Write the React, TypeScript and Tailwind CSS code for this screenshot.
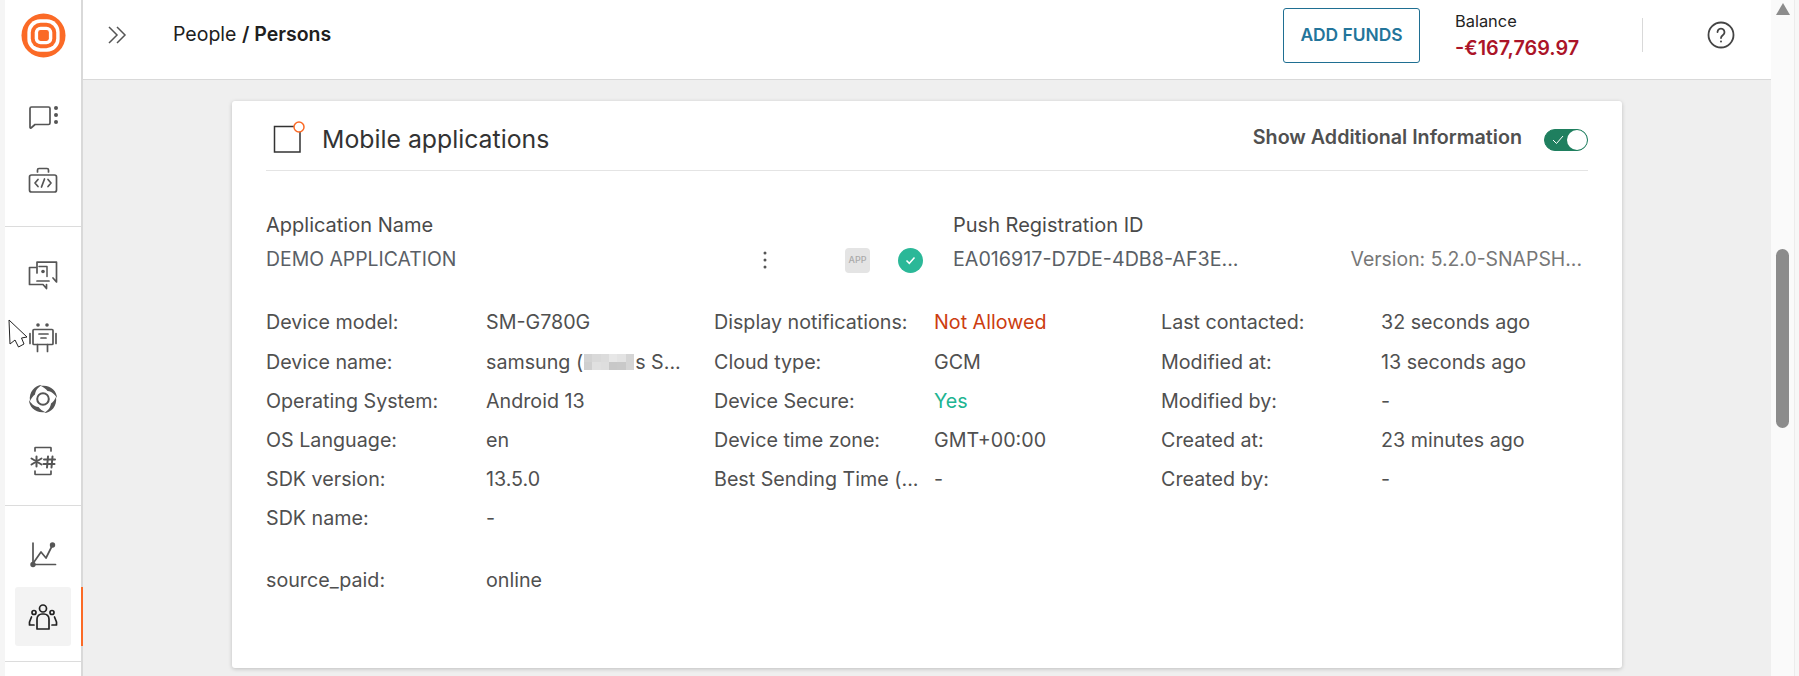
import React from "react";

const Row = ({ label, value, valueClass = "text-[#505050]" }: { label: string; value: React.ReactNode; valueClass?: string }) => (
  <div className="flex h-[39.2px] items-center">
    <div className="w-[220px] shrink-0 truncate pr-2 text-[#505050]">{label}</div>
    <div className={"min-w-0 flex-1 truncate " + valueClass}>{value}</div>
  </div>
);

const NavIcon = ({ children, active }: { children: React.ReactNode; active?: boolean }) => (
  <div className={"mx-[10px] flex h-[59px] w-[56px] shrink-0 items-center justify-center rounded-[3px] " + (active ? "bg-[#f3f3f3]" : "")}>
    <svg width="32" height="32" viewBox="0 0 32 32" fill="none" stroke={active ? "#222" : "#555"} strokeWidth="1.7" strokeLinecap="round" strokeLinejoin="round">
      {children}
    </svg>
  </div>
);

const mosaic = [
  "bg-[#d3d3d3]", "bg-[#d9d9d9]", "bg-[#dcdcdc]", "bg-[#e7e7e7]", "bg-[#e3e3e3]", "bg-[#d5d5d5]",
  "bg-[#cfcfcf]", "bg-[#e0e0e0]", "bg-[#dedede]", "bg-[#c8c8c8]", "bg-[#c9c9c9]", "bg-[#d5d5d5]",
];

export default function App() {
  return (
    <div className="relative flex h-[676px] w-[1799px] overflow-hidden bg-[#f5f5f5] font-['Inter',sans-serif] text-[19.7px]">
      <div className="w-[5px] shrink-0 bg-[#f5f5f5]" />
      <aside className="relative flex w-[78px] shrink-0 flex-col border-r-2 border-[#d9d9d9] bg-white">
        <div className="flex h-[72px] shrink-0 items-center justify-center pb-[2px]">
          <svg width="45" height="45" viewBox="0 0 46 46">
            <circle cx="23" cy="23" r="22.5" fill="#fb6a26" />
            <rect x="6.5" y="6.5" width="33" height="33" rx="13" fill="#fff" />
            <rect x="10" y="10" width="26" height="26" rx="10" fill="#fb6a26" />
            <rect x="14" y="14" width="18" height="18" rx="6" fill="#fff" />
            <rect x="17.5" y="17.5" width="11" height="11" rx="2.5" fill="#fb6a26" />
          </svg>
        </div>
        <div className="flex h-[155px] shrink-0 flex-col items-start gap-[3px] border-b border-[#dcdcdc] pt-[16px]">
          <NavIcon>
            <path d="M3 6.500q0-1.500 1.500-1.500h17q1.500 0 1.500 1.500v14.500q0 1.500-1.500 1.500H8l-4 3.500q-1 .5-1-1z" />
            <circle cx="29" cy="6" r="2" fill="#555" stroke="none" />
            <circle cx="29" cy="13" r="2" fill="#555" stroke="none" />
            <circle cx="29" cy="20" r="2" fill="#555" stroke="none" />
          </NavIcon>
          <NavIcon>
            <rect x="2.500" y="11" width="27" height="17" rx="2" />
            <path d="M10.500 8V6a1.500 1.500 0 0 1 1.500-1.500h8A1.500 1.500 0 0 1 21.500 6v2M11 15.500l-3 3.500 3 3.500M21 15.500l3 3.500-3 3.500M17.500 15l-3 8" />
          </NavIcon>
        </div>
        <div className="flex h-[279px] shrink-0 flex-col items-start gap-[3px] border-b border-[#dcdcdc] pt-[18px]">
          <NavIcon>
            <path d="M9 8.500H2.500v17H16l3.500 4v-4" />
            <path d="M10 14V3.200h19.500V23L26 19" />
            <path d="M10 22h12" />
            <circle cx="16" cy="12.500" r="1.800" fill="#555" stroke="none" />
            <path d="M12 7.500h8v10" strokeWidth="1.500" />
          </NavIcon>
          <NavIcon>
            <rect x="6" y="8.500" width="20" height="15" rx="1" />
            <path d="M12 13h9M14 17h5M10.500 23.500v7M20.500 23.500v7M3 12.500v10M29 12.500v10" />
            <circle cx="11" cy="4" r="1.800" fill="#555" stroke="none" />
            <circle cx="20" cy="4" r="1.800" fill="#555" stroke="none" />
          </NavIcon>
          <NavIcon>
            <circle cx="16" cy="16" r="5.800" strokeWidth="2" />
            <path d="M3 18C1.500 9 8 2 15 2c-3.500 2-6.500 5-7 9.500-2 1.500-4 4-5 6.500z" fill="#555" stroke="none" />
            <path d="M14 3c9-1.500 16 5 16 12-2-3.500-5-6.500-9.500-7-1.500-2-4-4-6.500-5z" fill="#555" stroke="none" />
            <path d="M29 14c1.500 9-5 16-12 16 3.500-2 6.500-5 7-9.500 2-1.500 4-4 5-6.500z" fill="#555" stroke="none" />
            <path d="M18 29c-9 1.500-16-5-16-12 2 3.500 5 6.500 9.500 7 1.500 2 4 4 6.500 5z" fill="#555" stroke="none" />
          </NavIcon>
          <NavIcon>
            <path d="M8 6V3q0-.5.5-.5h15q.5 0 .5.5v3M8 26v3q0 .5.5.5h15q.5 0 .5-.5v-3" />
            <path d="M4.500 13.500l10 6M14.500 13.500l-10 6M9.500 11.500v10" strokeWidth="2" />
            <path d="M17 14.500h11M16.500 19h11M21 11.500l-1 11M25.500 11.500l-1 11" strokeWidth="2" />
          </NavIcon>
        </div>
        <div className="flex h-[156px] shrink-0 flex-col items-start gap-[3px] border-b border-[#dcdcdc] pt-[19px]">
          <NavIcon>
            <path d="M6 4v21.500h22.500" />
            <path d="M7 23l7-10 5 6 6-12" />
            <circle cx="6" cy="25.500" r="2.700" fill="#555" stroke="none" />
            <circle cx="25.500" cy="6" r="2.700" fill="#555" stroke="none" />
          </NavIcon>
          <NavIcon active>
            <circle cx="16" cy="7.500" r="3.500" />
            <path d="M10 28V18a5 5 0 0 1 5-5h2a5 5 0 0 1 5 5v10z" />
            <circle cx="7" cy="11.500" r="2" />
            <circle cx="25" cy="11.500" r="2" />
            <path d="M4.500 16L2.500 21v3H7M27.500 16l2 5v3H25" />
          </NavIcon>
        </div>
        <div className="absolute right-[-2px] top-[587px] h-[59px] w-[2px] bg-[#fb6a26]" />
      </aside>

      <main className="flex w-[1688px] shrink-0 flex-col bg-[#efefef]">
        <header className="flex h-[80px] shrink-0 items-center border-b border-[#d9d9d9] bg-white pb-[9px]">
          <svg className="ml-[25px]" width="19" height="18" viewBox="0 0 19 18" fill="none" stroke="#555" strokeWidth="1.500">
            <path d="M1 1l8 8-8 8M9 1l8 8-8 8" />
          </svg>
          <div className="ml-[46px] text-[19.5px] text-[#202020]">
            People <span className="font-semibold">/ Persons</span>
          </div>
          <button className="ml-auto h-[55px] w-[137px] rounded-[3px] border border-[#1f6f92] text-[17.4px] font-semibold text-[#23759b]">ADD FUNDS</button>
          <div className="ml-[35px] flex w-[187px] flex-col">
            <span className="text-[16.4px] leading-[27px] text-[#222]">Balance</span>
            <span className="text-[19.8px] font-semibold leading-[27px] text-[#ab1428]">-€167,769.97</span>
          </div>
          <div className="h-[34px] w-px bg-[#d9d9d9]" />
          <svg className="ml-[64px] mr-[36px]" width="28" height="28" viewBox="0 0 28 28" fill="none" stroke="#444" strokeWidth="1.800" strokeLinecap="round">
            <circle cx="14" cy="14" r="12.500" />
            <path d="M10.500 11a3.500 3.500 0 1 1 5.500 3c-1.300.9-2 1.500-2 3" />
            <circle cx="14" cy="20.500" r="1" fill="#444" stroke="none" />
          </svg>
        </header>

        <div className="mx-[149px] mt-[21px] h-[567px] rounded-[3px] bg-white px-[34px] shadow-[0_1px_4px_rgba(0,0,0,0.2)]">
          <div className="flex h-[70px] items-center border-b border-[#e4e4e4] pt-[3px]">
            <svg className="ml-[7px]" width="32" height="32" viewBox="0 0 32 32" fill="none">
              <path d="M27 10v21H1.500V5.500H21" stroke="#333" strokeWidth="1.500" />
              <circle cx="26" cy="6" r="5" fill="#fff" stroke="#fb6a26" strokeWidth="1.500" />
            </svg>
            <span className="ml-[17px] mt-[6px] text-[24.8px] text-[#333]">Mobile applications</span>
            <span className="ml-auto mt-[2px] font-semibold text-[#505050]">Show Additional Information</span>
            <div className="ml-[22px] mt-[6px] flex h-[22px] w-[44px] items-center justify-between rounded-full border border-[#1f7f5f] bg-[#1f7f5f] pl-[7px]">
              <svg width="12" height="10" viewBox="0 0 12 10" fill="none" stroke="#fff" strokeWidth="1">
                <path d="M1 5l3.500 3.500L11 1" />
              </svg>
              <span className="h-[20px] w-[20px] rounded-full bg-white" />
            </div>
          </div>

          <div className="mt-[40px] flex">
            <div className="w-[687px] shrink-0">
              <div className="text-[20px] leading-[28px] text-[#4a4a4a]">Application Name</div>
              <div className="mt-[5px] flex h-[32px] items-center text-[19.4px] text-[#5a5f66]">
                <span className="w-[497px]">DEMO APPLICATION</span>
                <svg width="4" height="18" viewBox="0 0 4 18" fill="#555">
                  <circle cx="2" cy="2" r="1.500" />
                  <circle cx="2" cy="9" r="1.500" />
                  <circle cx="2" cy="16" r="1.500" />
                </svg>
                <span className="ml-[78px] flex h-[25px] w-[25px] items-center justify-center rounded-[4px] bg-[#e4e4e4] text-[9px] font-medium text-[#aaa]">APP</span>
                <span className="ml-[28px] flex h-[25px] w-[25px] items-center justify-center rounded-full bg-[#2bb898]">
                  <svg width="11" height="9" viewBox="0 0 11 9" fill="none" stroke="#fff" strokeWidth="1.500">
                    <path d="M1.500 4.500l2.800 2.800L9.500 1.500" />
                  </svg>
                </span>
              </div>
            </div>
            <div className="min-w-0 flex-1">
              <div className="text-[20px] leading-[28px] text-[#4a4a4a]">Push Registration ID</div>
              <div className="mt-[5px] flex h-[32px] items-center justify-between text-[#5a5f66]">
                <span>EA016917-D7DE-4DB8-AF3E...</span>
                <span className="pr-[6px] text-[19.4px] text-[#777]">Version: 5.2.0-SNAPSH...</span>
              </div>
            </div>
          </div>

          <div className="mt-[27.5px] grid grid-cols-[448px_447px_1fr]">
            <div>
              <Row label="Device model:" value="SM-G780G" />
              <Row
                label="Device name:"
                value={
                  <span className="flex items-center">
                    samsung (
                    <span className="mx-[1px] grid h-[16px] w-[50px] shrink-0 grid-cols-6 grid-rows-2">
                      {mosaic.map((c, i) => (
                        <span key={i} className={c} />
                      ))}
                    </span>
                    s S...
                  </span>
                }
              />
              <Row label="Operating System:" value="Android 13" />
              <Row label="OS Language:" value="en" />
              <Row label="SDK version:" value="13.5.0" />
              <Row label="SDK name:" value="-" />
            </div>
            <div className="pr-[14px]">
              <Row label="Display notifications:" value="Not Allowed" valueClass="text-[#cc3d10]" />
              <Row label="Cloud type:" value="GCM" />
              <Row label="Device Secure:" value="Yes" valueClass="text-[#20b491]" />
              <Row label="Device time zone:" value="GMT+00:00" />
              <Row label="Best Sending Time (..." value="-" />
            </div>
            <div>
              <Row label="Last contacted:" value="32 seconds ago" />
              <Row label="Modified at:" value="13 seconds ago" />
              <Row label="Modified by:" value="-" />
              <Row label="Created at:" value="23 minutes ago" />
              <Row label="Created by:" value="-" />
            </div>
          </div>
          <div className="mt-[23px] w-[448px]">
            <Row label="source_paid:" value="online" />
          </div>
        </div>
      </main>

      <div className="flex w-[23px] shrink-0 flex-col items-center bg-[#fafafa] pt-[3px]">
        <svg width="14" height="12" viewBox="0 0 14 12" fill="#8c8c8c">
          <path d="M7 0l7 12H0z" />
        </svg>
        <div className="mt-[234px] h-[179px] w-[13px] rounded-full bg-[#8c8c8c]" />
      </div>
      <div className="w-[5px] shrink-0 border-l border-[#ececec] bg-[#f7f7f7]" />

      <svg className="absolute left-[8px] top-[319px]" width="21" height="30" viewBox="0 0 21 30" fill="#fff" stroke="#222" strokeWidth="1">
        <path d="M1 1L19 18l-5.500 1L16 25l-5.500 3L7 21l-5 4z" />
      </svg>
    </div>
  );
}
